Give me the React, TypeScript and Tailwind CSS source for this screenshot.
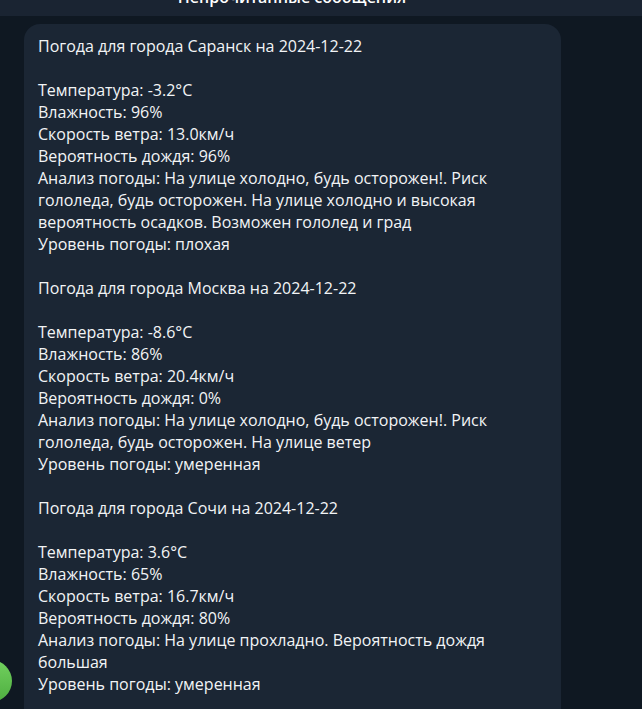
const reports = [
  {
    city: 'Саранск',
    lines: [
      'Температура: -3.2°C',
      'Влажность: 96%',
      'Скорость ветра: 13.0км/ч',
      'Вероятность дождя: 96%',
      'Анализ погоды: На улице холодно, будь осторожен!. Риск',
      'гололеда, будь осторожен. На улице холодно и высокая',
      'вероятность осадков. Возможен гололед и град',
      'Уровень погоды: плохая',
    ],
  },
  {
    city: 'Москва',
    lines: [
      'Температура: -8.6°C',
      'Влажность: 86%',
      'Скорость ветра: 20.4км/ч',
      'Вероятность дождя: 0%',
      'Анализ погоды: На улице холодно, будь осторожен!. Риск',
      'гололеда, будь осторожен. На улице ветер',
      'Уровень погоды: умеренная',
    ],
  },
  {
    city: 'Сочи',
    lines: [
      'Температура: 3.6°C',
      'Влажность: 65%',
      'Скорость ветра: 16.7км/ч',
      'Вероятность дождя: 80%',
      'Анализ погоды: На улице прохладно. Вероятность дождя',
      'большая',
      'Уровень погоды: умеренная',
    ],
  },
];

export default function App() {
  return (
    <div className="relative h-[709px] w-[642px] overflow-hidden bg-[#0f1822] font-['Open_Sans',sans-serif] text-[#f2f4f6]">
      <div className="flex h-4 items-start justify-center overflow-hidden bg-[#1a2432] pr-[58px]">
        <span className="-mt-[14px] text-[16px] font-semibold leading-[22px] text-white">
          Непрочитанные сообщения
        </span>
      </div>

      <div className="ml-6 mt-2 w-[537px] rounded-t-[16px] bg-[#1b2634] px-[14px] pt-[11px] pb-6 text-[16px] leading-[22px]">
        {reports.map((r, i) => (
          <div key={r.city}>
            {i > 0 && <div className="h-[22px]" />}
            <div>Погода для города {r.city} на 2024-12-22</div>
            <div className="h-[22px]" />
            {r.lines.map((l, j) => (
              <div key={j} className="whitespace-nowrap">{l}</div>
            ))}
          </div>
        ))}
      </div>

      {/* partially visible avatar */}
      <div className="absolute left-[-30px] top-[660px] h-[42px] w-[42px] rounded-full bg-gradient-to-b from-[#72d15f] to-[#4eae40]" />
    </div>
  );
}
